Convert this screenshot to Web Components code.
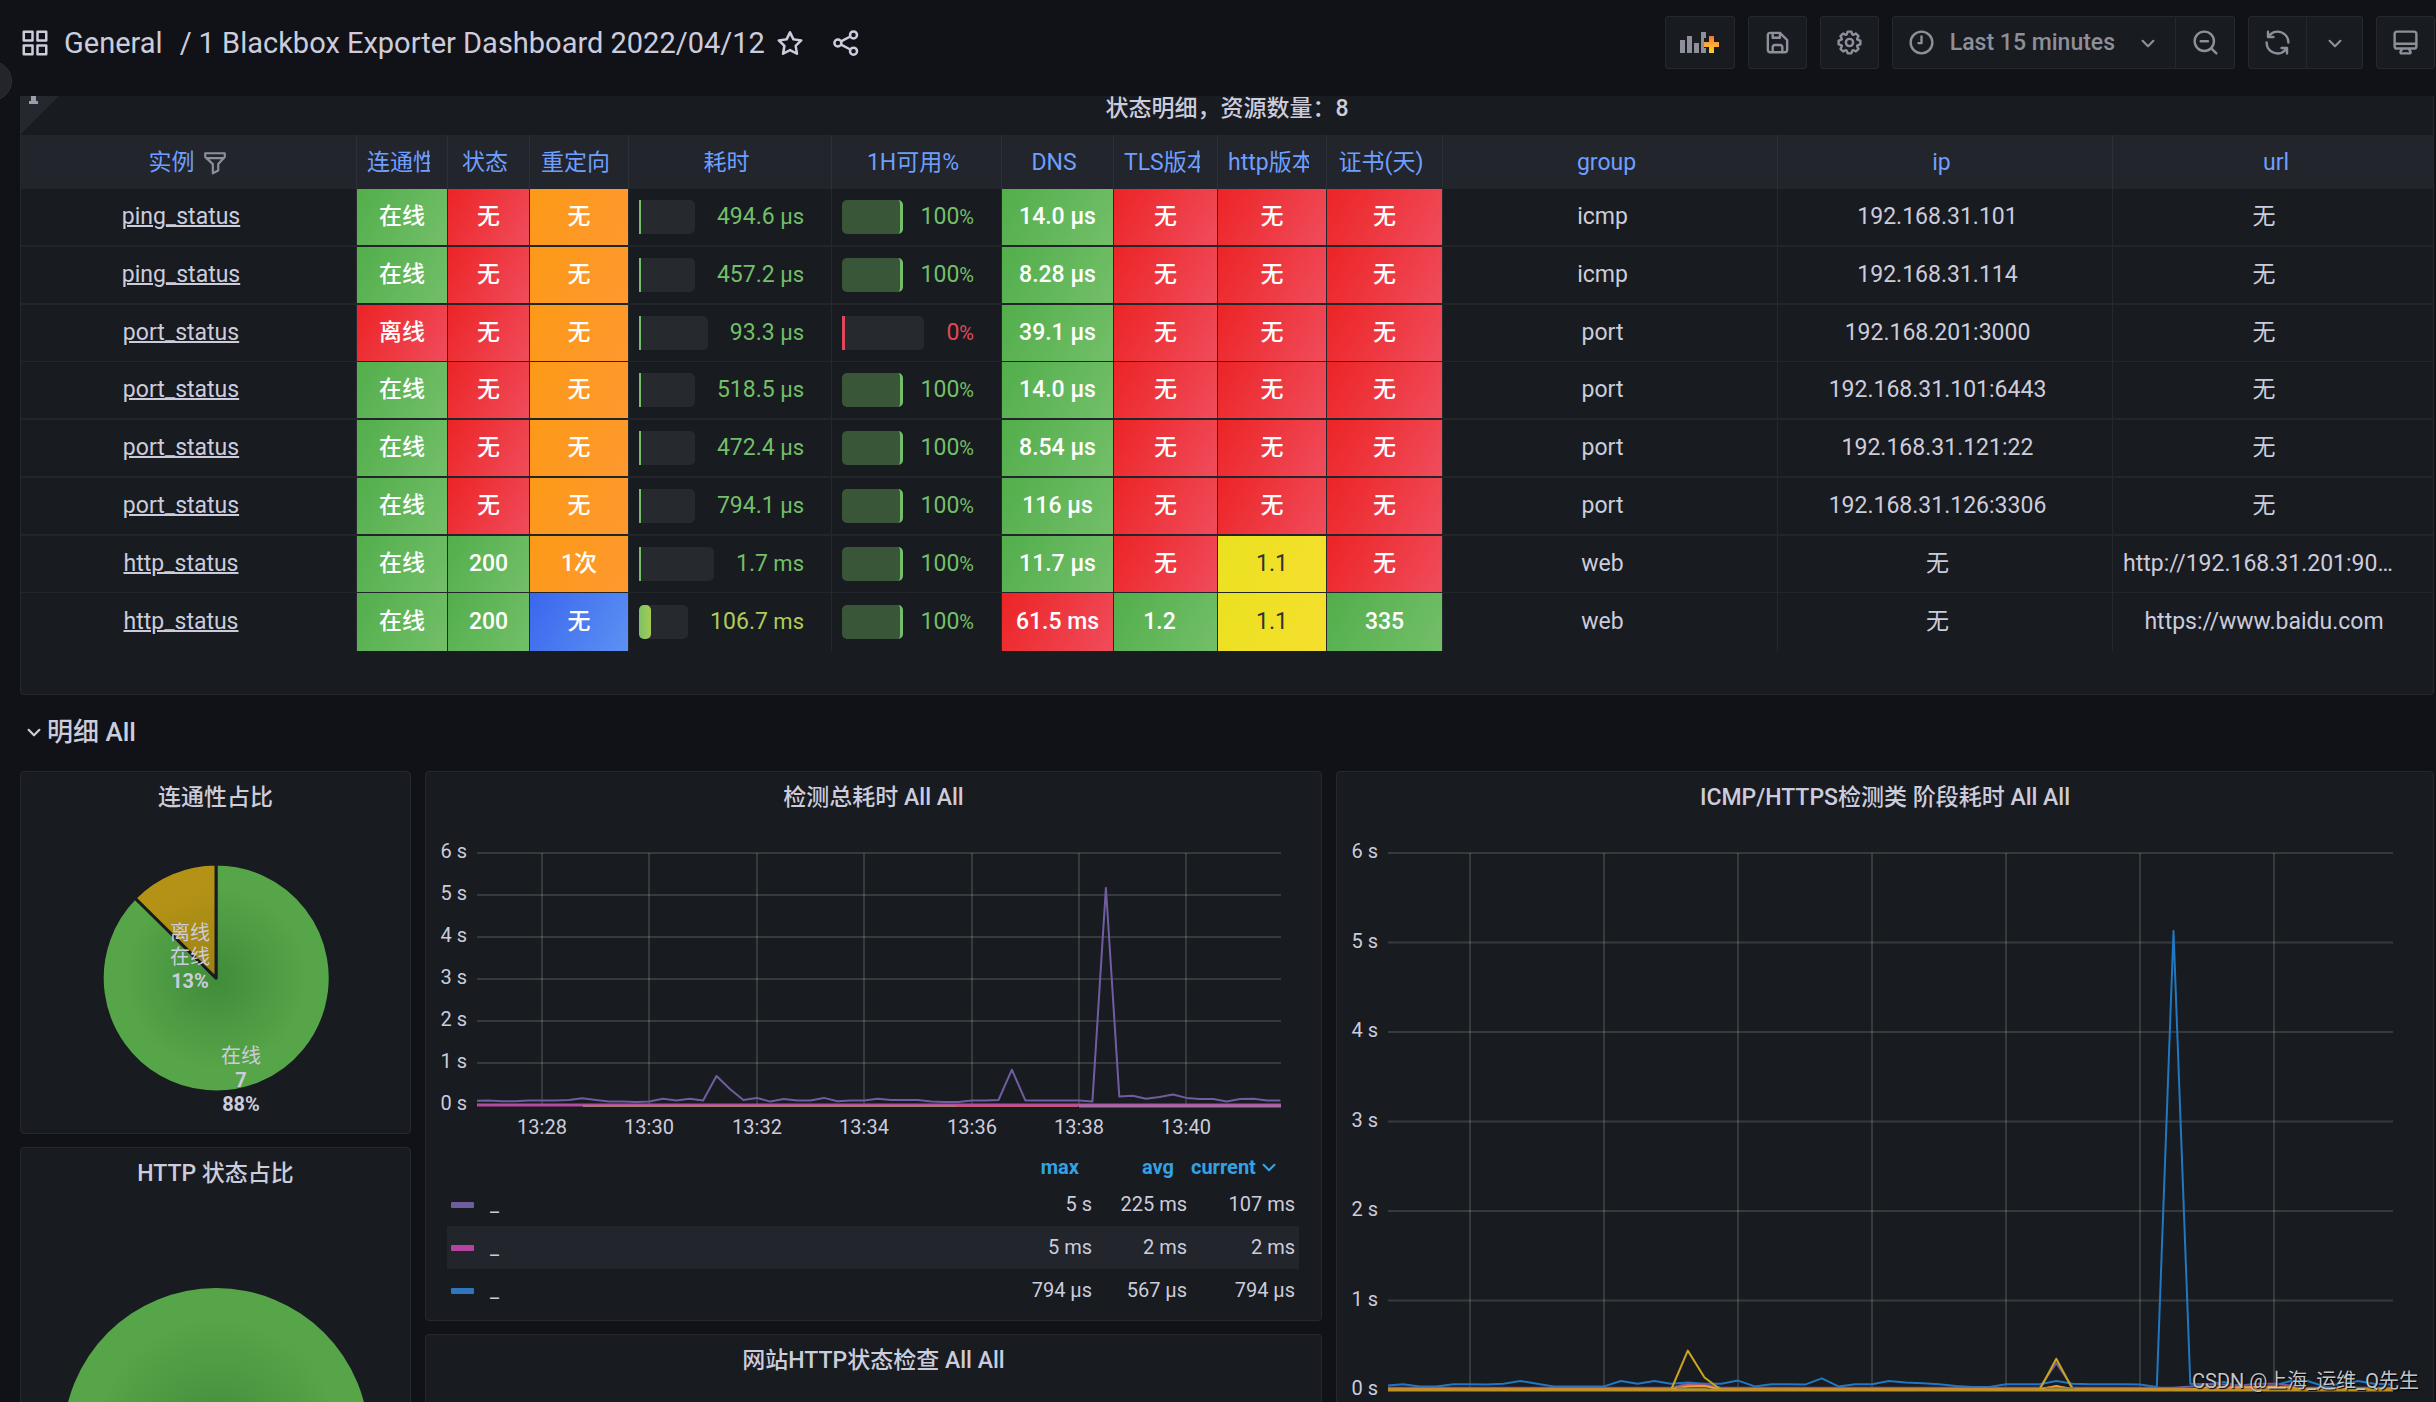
<!DOCTYPE html>
<html lang="zh-CN">
<head>
<meta charset="utf-8">
<title>1 Blackbox Exporter Dashboard 2022/04/12</title>
<style>
  html, body { margin: 0; height: 100%; }
  body {
    --canvas: #111217; --panel: #181b1f; --raised: #22252b; --line: #25282d;
    --text: #ccccdc; --muted: #8e8f9a; --link: #6e9fff;
    background: var(--canvas); color: var(--text); overflow: hidden;
    font: 400 23px/28px Roboto, "Noto Sans CJK SC", sans-serif;
  }
</style>
</head>
<body>
<bb-dashboard></bb-dashboard>
<script>
const ICONS = {
  apps: '<path d="M10,13H3a1,1,0,0,0-1,1v7a1,1,0,0,0,1,1h7a1,1,0,0,0,1-1V14A1,1,0,0,0,10,13ZM9,20H4V15H9ZM21,2H14a1,1,0,0,0-1,1v7a1,1,0,0,0,1,1h7a1,1,0,0,0,1-1V3A1,1,0,0,0,21,2ZM20,9H15V4h5Zm1,4H14a1,1,0,0,0-1,1v7a1,1,0,0,0,1,1h7a1,1,0,0,0,1-1V14A1,1,0,0,0,21,13Zm-1,7H15V15h5ZM10,2H3A1,1,0,0,0,2,3v7a1,1,0,0,0,1,1h7a1,1,0,0,0,1-1V3A1,1,0,0,0,10,2ZM9,9H4V4H9Z"/>',
  star: '<path d="M22,9.67A1,1,0,0,0,21.14,9l-5.69-.83L12.9,3a1,1,0,0,0-1.8,0L8.55,8.16,2.86,9a1,1,0,0,0-.81.68,1,1,0,0,0,.25,1l4.13,4-1,5.68A1,1,0,0,0,6.9,21.44L12,18.77l5.1,2.67a.93.93,0,0,0,.46.12,1,1,0,0,0,.59-.19,1,1,0,0,0,.4-1l-1-5.68,4.13-4A1,1,0,0,0,22,9.67Zm-6.15,4a1,1,0,0,0-.29.88l.72,4.2-3.76-2a1.06,1.06,0,0,0-.94,0l-3.76,2,.72-4.2a1,1,0,0,0-.29-.88l-3-3,4.21-.61a1,1,0,0,0,.76-.55L12,5.7l1.88,3.82a1,1,0,0,0,.76.55l4.21.61Z"/>',
  share: '<g fill="none" stroke="currentColor" stroke-width="2"><circle cx="18" cy="5.5" r="2.8"/><circle cx="5.5" cy="12" r="2.8"/><circle cx="18" cy="18.5" r="2.8"/><path d="M8 10.7l7.500-3.900M8 13.300l7.500 3.900"/></g>',
  save: '<path d="M20.71,9.29l-6-6a1,1,0,0,0-.32-.21A1.09,1.09,0,0,0,14,3H6A3,3,0,0,0,3,6V18a3,3,0,0,0,3,3H18a3,3,0,0,0,3-3V10A1,1,0,0,0,20.71,9.29ZM9,5h4V7H9Zm6,14H9V16a1,1,0,0,1,1-1h4a1,1,0,0,1,1,1Zm4-1a1,1,0,0,1-1,1H17V16a3,3,0,0,0-3-3H10a3,3,0,0,0-3,3v3H6a1,1,0,0,1-1-1V6A1,1,0,0,1,6,5H7V8A1,1,0,0,0,8,9h6a1,1,0,0,0,1-1V6.41l4,4Z"/>',
  cog: '<path d="M21.32,9.55l-1.89-.63.89-1.78A1,1,0,0,0,20.13,6L18,3.87a1,1,0,0,0-1.15-.19l-1.78.89-.63-1.89A1,1,0,0,0,13.5,2h-3a1,1,0,0,0-.95.68L8.92,4.57,7.14,3.68A1,1,0,0,0,6,3.87L3.87,6a1,1,0,0,0-.19,1.15l.89,1.78-1.89.63A1,1,0,0,0,2,10.5v3a1,1,0,0,0,.68.95l1.89.63-.89,1.78A1,1,0,0,0,3.87,18L6,20.13a1,1,0,0,0,1.15.19l1.78-.89.63,1.89a1,1,0,0,0,.95.68h3a1,1,0,0,0,.95-.68l.63-1.89,1.78.89A1,1,0,0,0,18,20.13L20.13,18a1,1,0,0,0,.19-1.15l-.89-1.78,1.89-.63A1,1,0,0,0,22,13.5v-3A1,1,0,0,0,21.32,9.55ZM20,12.78l-1.2.4A2,2,0,0,0,17.64,16l.57,1.14-1.1,1.1L16,17.64a2,2,0,0,0-2.79,1.16l-.4,1.2H11.22l-.4-1.2A2,2,0,0,0,8,17.64l-1.14.57-1.1-1.1L6.36,16A2,2,0,0,0,5.2,13.18L4,12.78V11.22l1.2-.4A2,2,0,0,0,6.36,8L5.79,6.89l1.1-1.1L8,6.36A2,2,0,0,0,10.82,5.2l.4-1.2h1.56l.4,1.2A2,2,0,0,0,16,6.36l1.14-.57,1.1,1.1L17.64,8a2,2,0,0,0,1.16,2.79l1.2.4ZM12,8a4,4,0,1,0,4,4A4,4,0,0,0,12,8Zm0,6a2,2,0,1,1,2-2A2,2,0,0,1,12,14Z"/>',
  clock: '<g fill="none" stroke="currentColor" stroke-width="2" stroke-linecap="round"><circle cx="12" cy="12" r="9"/><path d="M12 7v5.500H9.500" stroke-linejoin="round"/></g>',
  zoomout: '<g fill="none" stroke="currentColor" stroke-width="2" stroke-linecap="round"><circle cx="11" cy="11" r="8"/><path d="M16.800 16.800L21 21M8 11h6"/></g>',
  sync: '<path d="M19.91,15.51H15.38a1,1,0,0,0,0,2h2.4A8,8,0,0,1,4,12a1,1,0,0,0-2,0,10,10,0,0,0,16.88,7.23V21a1,1,0,0,0,2,0V16.5A1,1,0,0,0,19.91,15.51ZM12,2A10,10,0,0,0,5.12,4.77V3a1,1,0,0,0-2,0V7.5a1,1,0,0,0,1,1h4.5a1,1,0,0,0,0-2H6.22A8,8,0,0,1,20,12a1,1,0,0,0,2,0A10,10,0,0,0,12,2Z"/>',
  monitor: '<path d="M19,2H5A3,3,0,0,0,2,5V15a3,3,0,0,0,3,3H7.64l-.58,1a2,2,0,0,0,0,2,2,2,0,0,0,1.75,1h6.46A2,2,0,0,0,17,21a2,2,0,0,0,0-2l-.59-1H19a3,3,0,0,0,3-3V5A3,3,0,0,0,19,2ZM8.77,20,10,18H14l1.2,2ZM20,15a1,1,0,0,1-1,1H5a1,1,0,0,1-1-1V14H20Zm0-3H4V5A1,1,0,0,1,5,4H19a1,1,0,0,1,1,1Z"/>',
  chevron: '<path d="M7 10l5 5 5-5" fill="none" stroke="currentColor" stroke-width="2" stroke-linecap="round" stroke-linejoin="round"/>',
  filter: '<path d="M3 3h18v3.500l-6 6.500v6l-5 2.500V13L3 6.500zM3 7.500h18" fill="none" stroke="currentColor" stroke-width="2" stroke-linejoin="round"/>',
  addpanel: '<path d="M0 9h5v13H0zM7 5h5v17H7zM14 12h5v10h-5zM21 1h5v6h-2v10h2v5h-5z"/><path d="M29 5h5v6h5v5h-5v6h-5v-6h-5v-5h5z" fill="url(#g)"/><defs><linearGradient id="g" x1="0" y1="0" x2="0" y2="1"><stop offset="0" stop-color="#f2762e"/><stop offset=".5" stop-color="#fba93a"/><stop offset="1" stop-color="#fbd11c"/></linearGradient></defs>'
};

/* Base: each element renders its template into an open shadow root. */
class BBElement extends HTMLElement {
  connectedCallback() {
    if (this.shadowRoot) return;
    const t = document.createElement('template');
    t.innerHTML = this.template();
    this.attachShadow({ mode: 'open' }).append(t.content.cloneNode(true));
  }
}

customElements.define('bb-icon', class extends BBElement {
  template() {
    const n = this.getAttribute('name'), s = +this.getAttribute('size') || 29;
    const wide = n === 'addpanel';
    return `<style>:host{display:inline-flex;flex:none}svg{display:block;fill:currentColor}</style>
      <svg width="${wide ? 40 : s}" height="${wide ? 23 : s}" viewBox="${wide ? '0 0 40 23' : '0 0 24 24'}" aria-hidden="true">${ICONS[n]}</svg>`;
  }
});

customElements.define('bb-toolbar', class extends BBElement {
  template() {
    return `<style>
      :host{display:block;height:96px}
      header{display:flex;align-items:center;justify-content:space-between;padding:16px 1px 0 20px;height:53px}
      nav,.tools,.group{display:flex;align-items:center}
      nav{font-size:29px;line-height:36px}
      nav a{color:inherit;text-decoration:none}
      nav bb-icon{margin-right:14px}
      .sep{margin:0 7px 0 17px}
      .plain{display:flex;background:none;border:0;padding:0;color:inherit}
      nav .plain bb-icon{margin:0 0 0 10px} nav .plain + .plain bb-icon{margin-left:26px}
      .tools{gap:13px}
      button{font:inherit;color:var(--muted)}
      .tools button{display:flex;align-items:center;justify-content:center;box-sizing:border-box;height:53px;min-width:59px;
        background:var(--panel);border:1px solid var(--line);border-radius:3px;padding:0 14px;font-weight:500}
      .group button:first-child{border-radius:3px 0 0 3px}
      .group button + button{border-left:0;border-radius:0 3px 3px 0}
      .range bb-icon:first-child{margin-right:14px} .range bb-icon:last-child{margin-left:20px}
      .group .narrow{min-width:56px}
    </style>
    <header>
      <nav aria-label="breadcrumb"><bb-icon name="apps" size="30"></bb-icon><a href="#general">General</a><span class="sep">/</span><a href="#dashboard">1 Blackbox Exporter Dashboard 2022/04/12</a>
        <button class="plain" aria-label="star"><bb-icon name="star" size="30"></bb-icon></button><button class="plain" aria-label="share"><bb-icon name="share" size="30"></bb-icon></button></nav>
      <div class="tools">
        <button aria-label="add panel"><bb-icon name="addpanel"></bb-icon></button>
        <button aria-label="save"><bb-icon name="save"></bb-icon></button>
        <button aria-label="settings"><bb-icon name="cog"></bb-icon></button>
        <div class="group"><button class="range"><bb-icon name="clock"></bb-icon>Last 15 minutes<bb-icon name="chevron" size="26"></bb-icon></button><button aria-label="zoom out"><bb-icon name="zoomout"></bb-icon></button></div>
        <div class="group"><button aria-label="refresh"><bb-icon name="sync"></bb-icon></button><button class="narrow" aria-label="interval"><bb-icon name="chevron" size="26"></bb-icon></button></div>
        <button aria-label="cycle view"><bb-icon name="monitor"></bb-icon></button>
      </div>
    </header>`;
  }
});

customElements.define('bb-panel', class extends BBElement {
  template() {
    return `<style>
      :host{display:block;box-sizing:border-box;background:var(--panel);border:1px solid var(--line);border-radius:4px;overflow:hidden;min-width:0}
      h2{margin:0;padding:12px 0 11px;font:500 23px/28px Roboto,"Noto Sans CJK SC",sans-serif;text-align:center}
      :host([scrolled]){border-top:0;border-radius:0 0 4px 4px}
      :host([scrolled]) h2{padding:0 0 13px;line-height:26px}
    </style><h2>${this.getAttribute('heading')}</h2><slot></slot>`;
  }
});

customElements.define('bb-gauge', class extends BBElement {
  template() {
    const kind = this.getAttribute('kind');
    return `<style>
      :host{display:flex;align-items:center;height:100%;color:#73bf69;white-space:nowrap}
      .bar{flex:1;box-sizing:border-box;height:34px;background:#26292d;border-radius:0 5px 5px 0;border-left:2px solid #73bf69}
      .bar.full{background:#3a5639;border-left:0;border-right:3px solid #73bf69;border-radius:5px}
      .bar.zero{border-left:3px solid #e0485a}
      .bar.part{border:0;border-radius:5px}
      .part i{display:block;width:12px;height:34px;border-radius:5px;background:linear-gradient(90deg,#7cc267,#a5cb52)}
      .value{margin:0 17px 0 22px}
      .unit{font-size:22px}
      .full .unit,.zero .unit{font-size:20px}
      .value.zero{color:#e0485a}
      .value.full{margin-left:18px}
      .value.part{color:#b0cc57}
    </style><div class="bar ${kind}"><i></i></div><div class="value ${kind}">${this.getAttribute('value')}<span class="unit">${this.getAttribute('unit')}</span></div>`;
  }
});

const NONE = '无', R = ['r', NONE];
const ROWS = [
  ['ping_status', ['g', '在线'], R, ['o', NONE], ['', '494.6', ' µs'], ['full', '100', '%'], ['g', '14.0 µs'], R, R, R, 'icmp', '192.168.31.101', NONE],
  ['ping_status', ['g', '在线'], R, ['o', NONE], ['', '457.2', ' µs'], ['full', '100', '%'], ['g', '8.28 µs'], R, R, R, 'icmp', '192.168.31.114', NONE],
  ['port_status', ['r', '离线'], R, ['o', NONE], ['', '93.3', ' µs'], ['zero', '0', '%'], ['g', '39.1 µs'], R, R, R, 'port', '192.168.201:3000', NONE],
  ['port_status', ['g', '在线'], R, ['o', NONE], ['', '518.5', ' µs'], ['full', '100', '%'], ['g', '14.0 µs'], R, R, R, 'port', '192.168.31.101:6443', NONE],
  ['port_status', ['g', '在线'], R, ['o', NONE], ['', '472.4', ' µs'], ['full', '100', '%'], ['g', '8.54 µs'], R, R, R, 'port', '192.168.31.121:22', NONE],
  ['port_status', ['g', '在线'], R, ['o', NONE], ['', '794.1', ' µs'], ['full', '100', '%'], ['g', '116 µs'], R, R, R, 'port', '192.168.31.126:3306', NONE],
  ['http_status', ['g', '在线'], ['g', '200'], ['o', '1次'], ['', '1.7', ' ms'], ['full', '100', '%'], ['g', '11.7 µs'], R, ['y', '1.1'], R, 'web', NONE, 'http://192.168.31.201:9090/graph'],
  ['http_status', ['g', '在线'], ['g', '200'], ['b', NONE], ['part', '106.7', ' ms'], ['full', '100', '%'], ['r', '61.5 ms'], ['g start', '1.2'], ['y', '1.1'], ['g', '335'], 'web', NONE, 'https://www.baidu.com']
];
const HEADS = ['实例', '连通性', '状态', '重定向', '耗时', '1H可用%', 'DNS', 'TLS版本', 'http版本', '证书(天)', 'group', 'ip', 'url'];
const WIDTHS = [336, 91, 82, 99, 203, 170, 112, 104, 109, 116, 335, 335, 0];

customElements.define('bb-status-table', class extends BBElement {
  cell(v, i) {
    if (i === 0) return `<td class="text"><a href="#${v}">${v}</a></td>`;
    if (i === 4 || i === 5) return `<td class="gauge"><bb-gauge kind="${v[0]}" value="${v[1]}" unit="${v[2]}"></bb-gauge></td>`;
    return Array.isArray(v) ? `<td class="fill ${v[0]}">${v[1]}</td>` : `<td class="text">${v}</td>`;
  }
  template() {
    return `<style>
      :host{display:block;padding-bottom:43px}
      table{border-collapse:separate;border-spacing:0;table-layout:fixed;width:100%}
      th,td{box-sizing:border-box;padding:0 25px 0 10px;text-align:center;white-space:nowrap;overflow:hidden;border-right:1px solid var(--line);font-weight:400}
      th:last-child,td:last-child{border-right:0}
      th{height:54px;background:var(--raised);color:var(--link);padding:2px 17px 0 10px;border-right-color:#2d3036}
      th:first-child{padding-left:16px}
      th:last-child{padding-right:4px}
      th span{display:flex;overflow:hidden;justify-content:safe center;align-items:center;gap:7px}
      th bb-icon{color:var(--muted)}
      td{height:58px;border-bottom:2px solid #22252a}
      td:last-child{padding-right:28px}
      tr:nth-child(4n+3) td{height:57px;border-bottom-width:1px}
      tr:last-child td{border-bottom:0}
      td.text{text-overflow:ellipsis}
      a{color:inherit;text-decoration:underline;text-decoration-thickness:2px}
      td.gauge{padding:0 10px}
      td.fill{padding:0;color:#fff;font-weight:500;background-clip:padding-box}
      .g{background-image:linear-gradient(120deg,#52ae4b,#73bf69)}
      .r{background-image:linear-gradient(120deg,#ec2425,#f04c5c)}
      .o{background-image:linear-gradient(120deg,#fc9a16,#ff9830)}
      .b{background-image:linear-gradient(120deg,#3b66ee,#5c91f3)}
      .y{background-image:linear-gradient(120deg,#eae11f,#f6df2e)}
      td.y{color:#33342a;font-weight:400}
      td.start{padding-right:12px}
    </style>
    <table><colgroup>${WIDTHS.map(w => `<col${w ? ` style="width:${w}px"` : ''}>`).join('')}</colgroup>
    <thead><tr>${HEADS.map((h, i) => `<th><span>${h}${i ? '' : '<bb-icon name="filter" size="26"></bb-icon>'}</span></th>`).join('')}</tr></thead>
    <tbody>${ROWS.map(r => `<tr>${r.map((v, i) => this.cell(v, i)).join('')}</tr>`).join('')}</tbody></table>`;
  }
});

customElements.define('bb-info-corner', class extends BBElement {
  template() {
    return `<style>:host{display:block;position:absolute;left:0;top:0}svg{display:block}</style>
      <svg width="39" height="39" viewBox="0 0 39 39"><path d="M0 0h39L0 39z" fill="#25282e"/><path d="M11 0h5v5h2v3H9V5h2z" fill="#9c9daa"/></svg>`;
  }
});

customElements.define('bb-pie', class extends BBElement {
  template() {
    const small = this.getAttribute('slices') === '2';
    const label = (x, y, lines) => lines.map((l, i) => `<text x="${x}" y="${y + i * 24}" class="${/^\d/.test(l) ? 'n' : ''}">${l}</text>`).join('');
    const body = small
      ? `<path d="M195 155V41A114 114 0 1 1 114 75z" fill="url(#a)"/><path d="M195 155L114 75A114 114 0 0 1 195 41z" fill="url(#b)"/>
         ${label(169, 117, ['离线', '在线', '13%'])}${label(220, 240, ['在线', '7', '88%'])}`
      : `<circle cx="195" cy="242" r="153" fill="url(#a)"/>`;
    const g = small ? [195, 155, 114] : [195, 242, 153];
    const grad = (id, c, e) => `<radialGradient id="${id}" gradientUnits="userSpaceOnUse" cx="${g[0]}" cy="${g[1]}" r="${g[2]}"><stop offset="0" stop-color="${c}"/><stop offset=".8" stop-color="${e}"/></radialGradient>`;
    return `<style>:host{display:block}svg{display:block;width:100%}path{stroke:#181b1f;stroke-width:3;stroke-linejoin:round}
      text{font-size:20px;fill:#ccccdc;text-anchor:middle}.n{font-weight:700}</style>
      <svg viewBox="0 0 389 ${small ? 310 : 410}"><defs>${grad('a', '#3f8c3a', '#56a548')}${grad('b', '#9a8312', '#b49216')}</defs>${body}</svg>`;
  }
});

const TOTAL = [.1,.11,.09,.09,.11,.11,.11,.12,.16,.12,.08,.08,.07,.08,.15,.11,.15,.11,.69,.38,.12,.17,.08,.14,.11,.11,.17,.09,.11,.11,.15,.12,.12,.12,.08,.07,.07,.11,.11,.12,.84,.11,.11,.11,.11,.11,.08,5.17,.2,.22,.15,.19,.25,.17,.14,.14,.08,.14,.15,.11,.11];
const PHASE = [.05,.065,.04,.04,.065,.065,.06,.07,.1,.07,.04,.04,.04,.04,.1,.07,.1,.07,.085,.07,.07,.105,.04,.065,.065,.06,.13,.04,.065,.065,.1,.085,.075,.065,.045,.035,.035,.065,.065,.065,.1,.07,.065,.065,.065,.06,.035,5.13,.07,.06,.09,.04,.03,.05,.1,.1,.04,.07,.1,.07,.06];
const sparse = (base, peaks) => PHASE.map((_, i) => peaks[i] ?? base);
const CHARTS = {
  total: { w: 895, h: 329, left: 51, right: 855, top: 30, step: 42, tick: 116, every: 107.4, labels: true,
    lines: [['#705da0', TOTAL, 2]],
    flats: [['#b64aa0', 51, 855, 3, 0], ['#9c7d6a', 157, 652, 2, 1], ['#c0586f', 530, 652, 2, 1], ['#a46ca0', 653, 855, 3, 1]] },
  phase: { w: 1096, h: 620, left: 51, right: 1056, top: 30, step: 89.5, tick: 133, every: 134, labels: false,
    lines: [['#1f78c1', PHASE, 2],
      ['#705da0', sparse(.025, { 18: .07, 19: .06, 40: .3, 48: .04, 49: .06, 50: .06, 51: .05, 52: .07, 53: .07, 54: .05 }), 2],
      ['#c15c6b', sparse(.015, { 18: .055, 19: .05, 40: .04 }), 2],
      ['#f29a3c', sparse(.005, { 18: .04, 19: .045, 40: .045, 49: .03, 50: .03, 51: .03, 52: .035, 53: .035, 54: .03 }), 2],
      ['#caa51f', sparse(0, { 18: .44, 19: .14, 40: .35 }), 2]],
    flats: [['#5f7a55', 340, 370, 3, -1], ['#5f7a55', 708, 738, 3, -1], ['#b8951f', 51, 1056, 3, 0]] }
};

customElements.define('bb-line-chart', class extends BBElement {
  template() {
    const c = CHARTS[this.getAttribute('chart')], y0 = c.top + 6 * c.step, dt = c.every / 8, first = c.tick - 4 * dt;
    let out = '';
    for (let i = 0; i <= 6; i++) {
      const y = c.top + i * c.step;
      out += `<path class="grid" d="M${c.left} ${y}H${c.right}"/><text class="y" x="${c.left - 10}" y="${y + 5}">${6 - i} s</text>`;
    }
    for (let i = 0; i < 7; i++) {
      const x = Math.round(c.tick + i * c.every);
      out += `<path class="grid" d="M${x} ${c.top}V${y0}"/>`;
      if (c.labels) out += `<text class="x" x="${x}" y="${y0 + 29}">13:${28 + i * 2}</text>`;
    }
    for (const [color, vals, w] of c.lines) {
      const pts = vals.map((v, i) => `${i ? (first + (i - 1) * dt).toFixed(1) : c.left},${(y0 - v * c.step).toFixed(1)}`).join(' ');
      out += `<polyline points="${pts}" fill="none" stroke="${color}" stroke-width="${w}" stroke-linejoin="round"/>`;
    }
    for (const [color, a, b, w, dy] of c.flats) out += `<path d="M${a} ${y0 + dy}H${b}" stroke="${color}" stroke-width="${w}"/>`;
    return `<style>:host{display:block}svg{display:block;width:100%}.grid{stroke:#c8c8c8;stroke-opacity:.18;stroke-width:2}
      text{font-size:20px;fill:#ccccdc}.y{text-anchor:end}.x{text-anchor:middle}</style>
      <svg viewBox="0 0 ${c.w} ${c.h}">${out}</svg>`;
  }
});

customElements.define('bb-legend', class extends BBElement {
  template() {
    const rows = [['#705da0', '5 s', '225 ms', '107 ms'], ['#b543a0', '5 ms', '2 ms', '2 ms'], ['#2f76bd', '794 µs', '567 µs', '794 µs']];
    return `<style>
      :host{display:block;padding:0 22px 8px 21px;font-size:20px;line-height:24px}
      table{width:100%;border-spacing:0;table-layout:fixed}
      th,td{box-sizing:border-box;padding:0 4px 2px 0;text-align:right;white-space:nowrap;font-weight:400;height:43px}
      thead th{height:31px;padding-right:17px}
      thead th:last-child{padding-right:18px}
      button{font:inherit;font-weight:700;color:#33a2e5;background:none;border:0;padding:0}
      thead th:last-child button{display:flex;align-items:center;margin-left:auto}
      tbody th{text-align:left;padding-left:4px}
      i{display:inline-block;width:23px;height:6px;border-radius:1px;vertical-align:middle;margin-right:16px}
      tbody tr:nth-child(2){background:var(--raised)}
    </style>
    <table><colgroup><col><col style="width:95px"><col style="width:95px"><col style="width:108px"></colgroup>
    <thead><tr><th></th><th><button>max</button></th><th><button>avg</button></th><th><button>current<bb-icon name="chevron" size="26"></bb-icon></button></th></tr></thead>
    <tbody>${rows.map(r => `<tr><th><i style="background:${r[0]}"></i>_</th>${r.slice(1).map(v => `<td>${v}</td>`).join('')}</tr>`).join('')}</tbody></table>`;
  }
});

customElements.define('bb-dashboard', class extends BBElement {
  template() {
    return `<style>
      :host{display:block;position:relative;height:100vh;overflow:hidden}
      main{padding:0 2px 0 20px}
      .top{position:relative}
      .row{display:flex;align-items:center;width:100%;height:76px;padding:0 0 3px 1px;background:none;border:0;color:inherit;font:500 26px/30px Roboto,"Noto Sans CJK SC",sans-serif}
      .grid{display:grid;grid-template-columns:391fr 897fr 1098fr;gap:14px;align-items:start}
      .col{display:grid;gap:13px;min-width:0}
      .menu{position:absolute;left:-28px;top:61px;width:40px;height:40px;box-sizing:border-box;border-radius:50%;background:var(--raised);border:1px solid #2d3036;padding:0}
      .mark{position:absolute;right:17px;bottom:8px;font-size:20px;line-height:26px;color:#c4c5c8;text-shadow:1px 1px 1px #000}
      .tall{height:400px}
    </style>
    <bb-toolbar></bb-toolbar>
    <button class="menu" aria-label="expand menu"></button>
    <main>
      <div class="top"><bb-panel scrolled heading="状态明细，资源数量：8"><bb-status-table></bb-status-table></bb-panel><bb-info-corner></bb-info-corner></div>
      <button class="row"><bb-icon name="chevron" size="26"></bb-icon>明细 All</button>
      <div class="grid">
        <div class="col"><bb-panel heading="连通性占比"><bb-pie slices="2"></bb-pie></bb-panel><bb-panel heading="HTTP 状态占比"><bb-pie slices="1"></bb-pie></bb-panel></div>
        <div class="col"><bb-panel heading="检测总耗时 All All"><bb-line-chart chart="total"></bb-line-chart><bb-legend></bb-legend></bb-panel><bb-panel class="tall" heading="网站HTTP状态检查 All All"></bb-panel></div>
        <bb-panel heading="ICMP/HTTPS检测类 阶段耗时 All All"><bb-line-chart chart="phase"></bb-line-chart></bb-panel>
      </div>
    </main>
    <div class="mark">CSDN @上海_运维_Q先生</div>`;
  }
});
</script>
</body>
</html>
